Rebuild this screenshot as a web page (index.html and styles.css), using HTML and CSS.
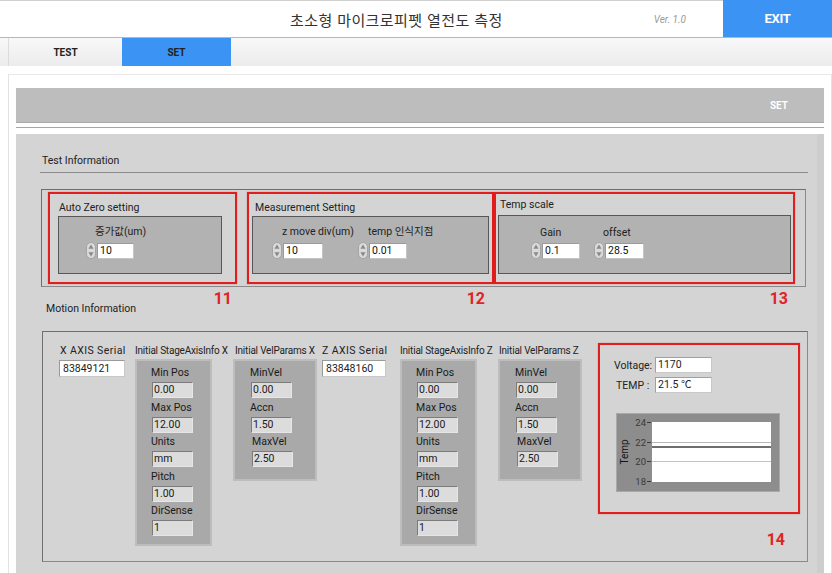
FILE: index.html
```html
<!DOCTYPE html>
<html lang="ko">
<head>
<meta charset="utf-8">
<title>초소형 마이크로피펫 열전도 측정</title>
<link rel="stylesheet" href="styles.css">
</head>
<body>
<div class="app">
  <header class="header">
    <div class="title">초소형 마이크로피펫 열전도 측정</div>
    <div class="ver">Ver. 1.0</div>
    <div class="exit">EXIT</div>
  </header>
  <nav class="tabs">
    <div class="tab">TEST</div>
    <div class="tab active">SET</div>
  </nav>
  <main class="main">
    <div class="frame">
      <div class="setbar"><span>SET</span></div>
      <div class="rule"></div>
      <div class="panel">
        <div class="sec-head">Test Information</div>
        <div class="group">
          <div class="rbox rb11">
            <div class="btitle">Auto Zero setting</div>
            <div class="ipanel ip11">
              <div class="field f11">
                <div class="flabel">증가값(um)</div>
                <div class="frow">
                  <svg class="spin" width="10" height="17" viewBox="0 0 10 17"><rect x="0.5" y="0.5" width="9" height="16" rx="4.5" fill="#dadada" stroke="#a4a4a4"/><path d="M5 2.5 L7.6 6.8 H2.4Z" fill="#8a8a8a"/><path d="M5 14.5 L7.6 10.2 H2.4Z" fill="#8a8a8a"/></svg>
                  <div class="inp w37">10</div>
                </div>
              </div>
            </div>
          </div>
          <div class="rbox rb12">
            <div class="btitle">Measurement Setting</div>
            <div class="ipanel ip12">
              <div class="field f12a">
                <div class="flabel">z move div(um)</div>
                <div class="frow">
                  <svg class="spin" width="10" height="17" viewBox="0 0 10 17"><rect x="0.5" y="0.5" width="9" height="16" rx="4.5" fill="#dadada" stroke="#a4a4a4"/><path d="M5 2.5 L7.6 6.8 H2.4Z" fill="#8a8a8a"/><path d="M5 14.5 L7.6 10.2 H2.4Z" fill="#8a8a8a"/></svg>
                  <div class="inp w40">10</div>
                </div>
              </div>
              <div class="field f12b">
                <div class="flabel">temp 인식지점</div>
                <div class="frow">
                  <svg class="spin" width="10" height="17" viewBox="0 0 10 17"><rect x="0.5" y="0.5" width="9" height="16" rx="4.5" fill="#dadada" stroke="#a4a4a4"/><path d="M5 2.5 L7.6 6.8 H2.4Z" fill="#8a8a8a"/><path d="M5 14.5 L7.6 10.2 H2.4Z" fill="#8a8a8a"/></svg>
                  <div class="inp w38">0.01</div>
                </div>
              </div>
            </div>
          </div>
          <div class="rbox rb13">
            <div class="btitle">Temp scale</div>
            <div class="ipanel ip13">
              <div class="field f13a">
                <div class="flabel">Gain</div>
                <div class="frow">
                  <svg class="spin" width="10" height="17" viewBox="0 0 10 17"><rect x="0.5" y="0.5" width="9" height="16" rx="4.5" fill="#dadada" stroke="#a4a4a4"/><path d="M5 2.5 L7.6 6.8 H2.4Z" fill="#8a8a8a"/><path d="M5 14.5 L7.6 10.2 H2.4Z" fill="#8a8a8a"/></svg>
                  <div class="inp w38">0.1</div>
                </div>
              </div>
              <div class="field f13b">
                <div class="flabel">offset</div>
                <div class="frow">
                  <svg class="spin" width="10" height="17" viewBox="0 0 10 17"><rect x="0.5" y="0.5" width="9" height="16" rx="4.5" fill="#dadada" stroke="#a4a4a4"/><path d="M5 2.5 L7.6 6.8 H2.4Z" fill="#8a8a8a"/><path d="M5 14.5 L7.6 10.2 H2.4Z" fill="#8a8a8a"/></svg>
                  <div class="inp w39">28.5</div>
                </div>
              </div>
            </div>
          </div>
        </div>
        <div class="numrow">
          <div class="motion-title">Motion Information</div>
          <div class="num n11">11</div>
          <div class="num n12">12</div>
          <div class="num n13">13</div>
        </div>
        <div class="mgroup">
          <div class="mcol cx">
            <div class="mlabel axis">X AXIS Serial</div>
            <div class="serial">83849121</div>
          </div>
          <div class="mcol cs">
            <div class="mlabel">Initial StageAxisInfo X</div>
            <div class="spanel">
              <div class="slabel">Min Pos</div><div class="sinp">0.00</div>
              <div class="slabel">Max Pos</div><div class="sinp">12.00</div>
              <div class="slabel">Units</div><div class="sinp">mm</div>
              <div class="slabel">Pitch</div><div class="sinp">1.00</div>
              <div class="slabel">DirSense</div><div class="sinp">1</div>
            </div>
          </div>
          <div class="mcol cv">
            <div class="mlabel ml2">Initial VelParams X</div>
            <div class="spanel vpanel">
              <div class="slabel">MinVel</div><div class="sinp">0.00</div>
              <div class="slabel">Accn</div><div class="sinp">1.50</div>
              <div class="slabel ind">MaxVel</div><div class="sinp ind">2.50</div>
            </div>
          </div>
          <div class="mcol cz">
            <div class="mlabel axis">Z AXIS Serial</div>
            <div class="serial">83848160</div>
          </div>
          <div class="mcol cs">
            <div class="mlabel">Initial StageAxisInfo Z</div>
            <div class="spanel">
              <div class="slabel">Min Pos</div><div class="sinp">0.00</div>
              <div class="slabel">Max Pos</div><div class="sinp">12.00</div>
              <div class="slabel">Units</div><div class="sinp">mm</div>
              <div class="slabel">Pitch</div><div class="sinp">1.00</div>
              <div class="slabel">DirSense</div><div class="sinp">1</div>
            </div>
          </div>
          <div class="mcol cvz">
            <div class="mlabel">Initial VelParams Z</div>
            <div class="spanel vpanel">
              <div class="slabel">MinVel</div><div class="sinp">0.00</div>
              <div class="slabel">Accn</div><div class="sinp">1.50</div>
              <div class="slabel ind">MaxVel</div><div class="sinp ind">2.50</div>
            </div>
          </div>
          <div class="mcol c14">
            <div class="rbox rb14">
              <div class="vrow">
                <div class="vlabel">Voltage:</div>
                <div class="vinp">1170</div>
              </div>
              <div class="vrow">
                <div class="vlabel tl">TEMP :</div>
                <div class="vinp">21.5 ℃</div>
              </div>
              <svg class="chart" width="164" height="79" viewBox="0 0 164 79">
                <rect x="0.5" y="0.5" width="163" height="78" fill="#8d8d8d" stroke="#a9a9a9"/>
                <rect x="36" y="9" width="119" height="60" fill="#ffffff"/>
                <line x1="36" y1="29.5" x2="155" y2="29.5" stroke="#b9b9b9" stroke-width="1"/>
                <line x1="36" y1="34" x2="155" y2="34" stroke="#6e6e6e" stroke-width="2"/>
                <line x1="36" y1="48.5" x2="155" y2="48.5" stroke="#c4c4c4" stroke-width="1"/>
                <g font-family="Roboto, sans-serif" font-size="9.5" fill="#3a3a3a" text-anchor="end">
                  <text x="30" y="12.5">24</text>
                  <text x="30" y="32.5">22</text>
                  <text x="30" y="51.5">20</text>
                  <text x="30" y="71.5">18</text>
                </g>
                <g stroke="#3a3a3a" stroke-width="1">
                  <line x1="31" y1="9.5" x2="35" y2="9.5"/>
                  <line x1="31" y1="29.5" x2="35" y2="29.5"/>
                  <line x1="31" y1="48.5" x2="35" y2="48.5"/>
                  <line x1="31" y1="68.5" x2="35" y2="68.5"/>
                </g>
                <text x="0" y="0" transform="translate(12 39) rotate(-90)" font-family="Roboto, sans-serif" font-size="10" fill="#111" text-anchor="middle">Temp</text>
              </svg>
            </div>
            <div class="num n14">14</div>
          </div>
        </div>
      </div>
    </div>
  </main>
</div>
</body>
</html>
```

FILE: styles.css
```css
* { box-sizing: border-box; }
html, body { margin: 0; padding: 0; }
body {
  width: 832px;
  height: 573px;
  overflow: hidden;
  background: #ffffff;
  font-family: Roboto, "Noto Sans CJK KR", sans-serif;
  color: #222;
}
.app { width: 832px; height: 573px; display: flex; flex-direction: column; }

/* header */
.header {
  height: 38px;
  display: flex;
  align-items: center;
  background: #fff;
  border-top: 1px solid #d0d0d0;
  border-bottom: 1px solid #b4b4b4;
  flex: none;
}
.title {
  padding-left: 290px;
  font-family: "Noto Sans CJK KR", sans-serif;
  font-size: 15px;
  color: #333;
  letter-spacing: 0.4px;
  white-space: nowrap;
}
.ver {
  margin-left: auto;
  margin-right: 37px;
  font-size: 10px;
  font-style: italic;
  color: #9a9a9a;
}
.exit {
  width: 109px;
  height: 37px;
  align-self: flex-start;
  margin-top: -1px;
  background: #3b93f3;
  color: #fff;
  font-weight: bold;
  font-size: 13px;
  display: flex;
  align-items: center;
  justify-content: center;
  letter-spacing: -0.3px;
}

/* tabs */
.tabs {
  height: 28px;
  flex: none;
  display: flex;
  padding-left: 8px;
  background: linear-gradient(#f8f8f8, #ececec);
  box-shadow: 0 1px 2px #d8d8d8;
}
.tab {
  width: 114px;
  display: flex;
  align-items: center;
  justify-content: center;
  font-size: 10px;
  font-weight: bold;
  color: #222;
  border-left: 1px solid #dcdcdc;
}
.tab.active {
  width: 109px;
  background: #3b93f3;
  border-left: none;
}

/* main */
.main { flex: 1; background: #fff; padding-left: 8px; }
.frame {
  margin-top: 8px;
  height: 100%;
  border-top: 1px solid #e8e8e8;
  border-left: 1px solid #e2e2e2;
  border-right: 1px solid #e2e2e2;
  padding: 13px 7px 0 7px;
  display: flex;
  flex-direction: column;
}
.setbar {
  height: 35px;
  background: #bdbdbd;
  border-bottom: 1px solid #aaaaaa;
  display: flex;
  align-items: center;
  justify-content: flex-end;
  padding-right: 36px;
  flex: none;
}
.setbar span { color: #fff; font-size: 10px; font-weight: bold; }
.rule { height: 1px; background: #a6a6a6; margin: 4px 0 6px; flex: none; }

.panel {
  flex: 1;
  background: #d4d4d4;
  border-right: 7px solid #cdcdcd;
  padding: 20px 8px 0 24px;
}
.sec-head {
  font-size: 10.5px;
  line-height: 14px;
  padding-left: 2px;
  padding-bottom: 4px;
  border-bottom: 1px solid #8a8a8a;
  width: 768px;
  color: #222;
}

/* test information group */
.group {
  margin-top: 16px;
  margin-left: 1px;
  width: 765px;
  border: 1px solid #8a8a8a;
  border-top-color: #6e6e6e;
  border-left-color: #6e6e6e;
  padding: 2px 0 2px 6px;
  display: flex;
}
.rbox {
  border: 2px solid #e21d1d;
  box-shadow: 0 0 1px rgba(200, 0, 0, 0.5);
}
.rb11 { width: 189px; height: 92px; padding: 7px 0 0 8px; }
.rb12 { width: 247px; height: 92px; padding: 7px 0 0 3px; margin-left: 10px; }
.rb13 { width: 301px; height: 92px; padding: 4px 0 0 2px; }
.btitle { font-size: 10.5px; line-height: 13px; margin-left: 1px; white-space: nowrap; }
.rb12 .btitle { margin-left: 3px; }
.rb13 .btitle { margin-left: 2px; }

.ipanel {
  margin-top: 2px;
  height: 58px;
  background: #b2b2b2;
  border: 1px solid #575757;
  display: flex;
  padding-top: 9px;
}
.ip11 { width: 164px; padding-left: 27px; }
.ip12 { width: 237px; padding-left: 19px; }
.ip13 { width: 293px; height: 59px; margin-top: 4px; padding-left: 32px; padding-top: 11px; }
.ip13 .frow { margin-top: 3px; }

.field { display: flex; flex-direction: column; flex: none; }
.flabel { font-size: 10.5px; line-height: 12px; white-space: nowrap; margin-left: 9px; }
.f12a .flabel, .f12b .flabel { margin-left: 10px; }
.frow { display: flex; align-items: center; margin-top: 4px; }
.spin { display: block; flex: none; margin-right: 1px; }
.inp {
  height: 16px;
  background: #fff;
  border: 1px solid #c4c4c4;
  border-top-color: #9a9a9a;
  border-left-color: #9a9a9a;
  font-size: 10.5px;
  line-height: 14px;
  padding-left: 2px;
  color: #111;
}
.w37 { width: 37px; }
.w38 { width: 38px; }
.w39 { width: 39px; }
.w40 { width: 40px; }
.f12a { width: 86px; }
.f13a { width: 63px; }

/* numbers row */
.numrow {
  display: grid;
  grid-template-columns: 196px 257px 301px;
  height: 44px;
  margin-left: 1px;
}
.num {
  font-size: 16px;
  line-height: 18px;
  font-weight: bold;
  color: #e02424;
}
.numrow .num {
  grid-row: 1;
  justify-self: end;
  align-self: start;
  margin-top: 3px;
}
.n11 { grid-column: 1; margin-right: 5px; }
.n12 { grid-column: 2; margin-right: 9px; }
.n13 { grid-column: 3; margin-right: 7px; }
.motion-title {
  grid-row: 1;
  grid-column: 1;
  justify-self: start;
  margin-top: 16px;
  margin-left: 5px;
  font-size: 10.5px;
  line-height: 12px;
  white-space: nowrap;
}

/* motion group */
.mgroup {
  margin-left: 2px;
  width: 766px;
  height: 231px;
  border: 1px solid #8a8a8a;
  border-top-color: #6e6e6e;
  border-left-color: #6e6e6e;
  padding: 13px 0 0 16px;
  display: flex;
  align-items: flex-start;
}
.mcol { display: flex; flex-direction: column; flex: none; }
.cx { width: 75px; }
.cs { width: 99px; }
.cv { width: 88px; }
.cz { width: 78px; }
.cvz { width: 100px; }
.mlabel {
  font-size: 10px;
  line-height: 12px;
  letter-spacing: -0.2px;
  white-space: nowrap;
  margin-left: 1px;
}
.mlabel.axis { font-size: 10.5px; letter-spacing: 0.4px; }
.ml2 { margin-left: 2px; }
.serial {
  margin-top: 3px;
  width: 66px;
  height: 17px;
  background: #fff;
  border: 1px solid #c8c8c8;
  border-top-color: #9a9a9a;
  border-left-color: #9a9a9a;
  font-size: 10.5px;
  line-height: 15px;
  padding-left: 3px;
}
.cz .serial { width: 64px; margin-left: 1px; }

.spanel {
  margin-top: 2px;
  margin-left: 1px;
  width: 77px;
  height: 187px;
  background: #a9a9a9;
  border: 2px solid #bdbdbd;
  padding: 5px 0 0 14px;
  display: flex;
  flex-direction: column;
  align-items: flex-start;
}
.vpanel { width: 84px; height: 122px; margin-left: 0; padding-left: 15px; }
.slabel {
  font-size: 10.5px;
  line-height: 14px;
  white-space: nowrap;
  color: #1a1a1a;
}
.sinp {
  margin-top: 2px;
  margin-bottom: 2.5px;
  margin-left: 1px;
  width: 41px;
  height: 16px;
  background: #dcdcdc;
  border: 1px solid #e6e6e6;
  border-top-color: #7c7c7c;
  border-left-color: #7c7c7c;
  font-size: 10.5px;
  line-height: 14px;
  padding-left: 1px;
  color: #1a1a1a;
}
.slabel.ind { margin-left: 2px; }
.sinp.ind { margin-left: 2px; }

.c14 { width: 202px; margin-top: -2px; }
.rb14 {
  width: 202px;
  height: 171px;
  padding: 12px 0 0 14px;
  display: flex;
  flex-direction: column;
  align-items: flex-start;
}
.vrow { display: flex; align-items: center; }
.vrow + .vrow { margin-top: 4px; }
.vlabel { width: 41px; font-size: 10.5px; white-space: nowrap; }
.vlabel.tl { padding-left: 2px; }
.vinp {
  width: 57px;
  height: 16px;
  background: #fff;
  border: 1px solid #c8c8c8;
  border-top-color: #a0a0a0;
  border-left-color: #a0a0a0;
  font-size: 10.5px;
  line-height: 14px;
  padding-left: 2px;
}
.chart { display: block; margin-top: 20px; margin-left: 2px; }
.n14 { align-self: flex-end; margin-top: 17px; margin-right: 15px; }
```
